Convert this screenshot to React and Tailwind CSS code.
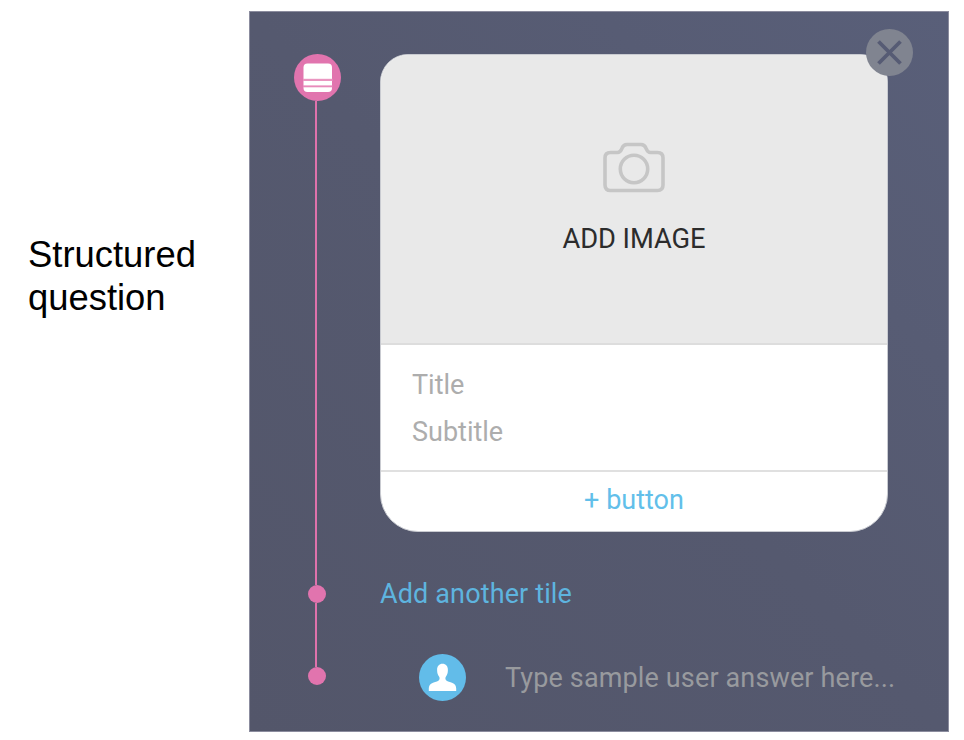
function TileIcon() {
  return (
    <svg viewBox="0 0 47 47" className="block size-[47px]">
      <circle cx="23.5" cy="23.5" r="23.5" fill="#e174ae" />
      <rect x="9.5" y="9.5" width="28.5" height="28.500" rx="4" fill="#fff" />
      <rect x="9" y="24.800" width="29.5" height="2.200" fill="#ea96c1" />
      <rect x="9" y="31.4" width="29.5" height="1.9" fill="#e88abb" />
    </svg>
  );
}

function CameraIcon() {
  return (
    <svg viewBox="0 0 62 51" className="-ml-px block h-[51px] w-[62px]" fill="none" stroke="#c6c6c6" strokeWidth="3.6" strokeLinejoin="round">
      <path d="M7.500 10.500H14.500C17.800 10.500 18 8.500 19 6.200C20 3.500 21.500 2.500 24 2.500H38C40.500 2.500 42 3.500 43 6.200C44 8.500 44.500 10.500 47.500 10.500H54.500Q60 10.500 60 16V43Q60 48.500 54.500 48.500H7.500Q2 48.500 2 43V16Q2 10.500 7.500 10.500Z" />
      <circle cx="31" cy="27" r="13.700" />
    </svg>
  );
}

function UserIcon() {
  return (
    <svg viewBox="0 0 47 47" className="block size-[47px]">
      <circle cx="23.500" cy="23.500" r="23.500" fill="#62bce9" />
      <path fill="#fff" d="M23.500 9.800C26.800 9.800 29 12.200 28.900 16C28.900 19.200 28.100 21.200 26.700 22.900C26.400 23.400 26.300 24.500 26.600 25.600C27.600 27.700 30 27.700 33 28.700C36 29.800 37.200 32 37.200 34.500V37H9.800V34.500C9.800 32 11 29.800 14 28.700C17 27.700 19.400 27.700 20.400 25.600C20.700 24.500 20.600 23.400 20.300 22.900C18.900 21.200 18.100 19.200 18.100 16C18 12.200 20.200 9.800 23.500 9.800Z" />
    </svg>
  );
}

function Timeline() {
  return (
    <div className="flex w-[47px] flex-col items-center">
      <TileIcon />
      <div className="-ml-[3px] h-[484px] w-[2px] bg-[#df72ac]" />
      <div className="-ml-[2px] size-[18px] rounded-full bg-[#e174ae]" />
      <div className="-ml-[3px] h-[64px] w-[2px] bg-[#df72ac]" />
      <div className="-ml-[2px] size-[18px] rounded-full bg-[#e174ae]" />
    </div>
  );
}

function Tile() {
  return (
    <div className="relative h-[478px] w-[508px]">
      <div className="flex h-full flex-col overflow-hidden rounded-t-[28px] rounded-b-[38px] border border-[#c9cbd1] bg-white">
        <div className="flex h-[290px] flex-col items-center border-b-2 border-[#dddddd] bg-[#e9e9e9] pt-[87px]">
          <CameraIcon />
          <div className="mt-[30px] text-[27.300px] leading-8 tracking-[-0.080px] text-[#2c2c2c]">ADD IMAGE</div>
        </div>
        <div className="flex h-[127px] flex-col gap-[15px] border-b-2 border-[#e0e0e0] pt-[24px] pl-[31px] text-[27px] leading-8 text-[#adadad]">
          <div>Title</div>
          <div>Subtitle</div>
        </div>
        <div className="pt-[12px] text-center text-[27px] leading-8 text-[#62bfea]">+ button</div>
      </div>
      <button className="absolute -top-[25px] -right-[25px] size-[47px] rounded-full bg-[#808490]">
        <svg viewBox="0 0 47 47" className="block size-[47px]" fill="none" stroke="#565b74" strokeWidth="3.800">
          <path d="M12.500 12.500L34.500 34.500M34.500 12.500L12.500 34.500" />
        </svg>
      </button>
    </div>
  );
}

export default function App() {
  return (
    <div className="flex h-[740px] w-[964px] bg-white pt-[11px]">
      <div className="w-[249px] pt-[222px] pl-[28px] font-['Liberation_Sans',Arial,sans-serif] text-[36.400px] leading-[43px] text-black">
        Structured
        <br />
        question
      </div>
      <div className="flex h-[721px] w-[700px] gap-[39px] border border-[#8b8c9e] bg-linear-to-tr from-[#53566a] via-[#55596f] to-[#595f79] pt-[42px] pl-[44px] font-[Roboto,sans-serif]">
        <Timeline />
        <div className="flex flex-col">
          <Tile />
          <div className="mt-[46px] text-[27px] leading-8 tracking-[0.130px] text-[#5eb4df]">Add another tile</div>
          <div className="mt-[43.500px] ml-[39px] flex items-center gap-[39px]">
            <UserIcon />
            <div className="pt-[2px] text-[27px] leading-8 tracking-[0.140px] whitespace-nowrap text-[#989a9e]">Type sample user answer here...</div>
          </div>
        </div>
      </div>
    </div>
  );
}
